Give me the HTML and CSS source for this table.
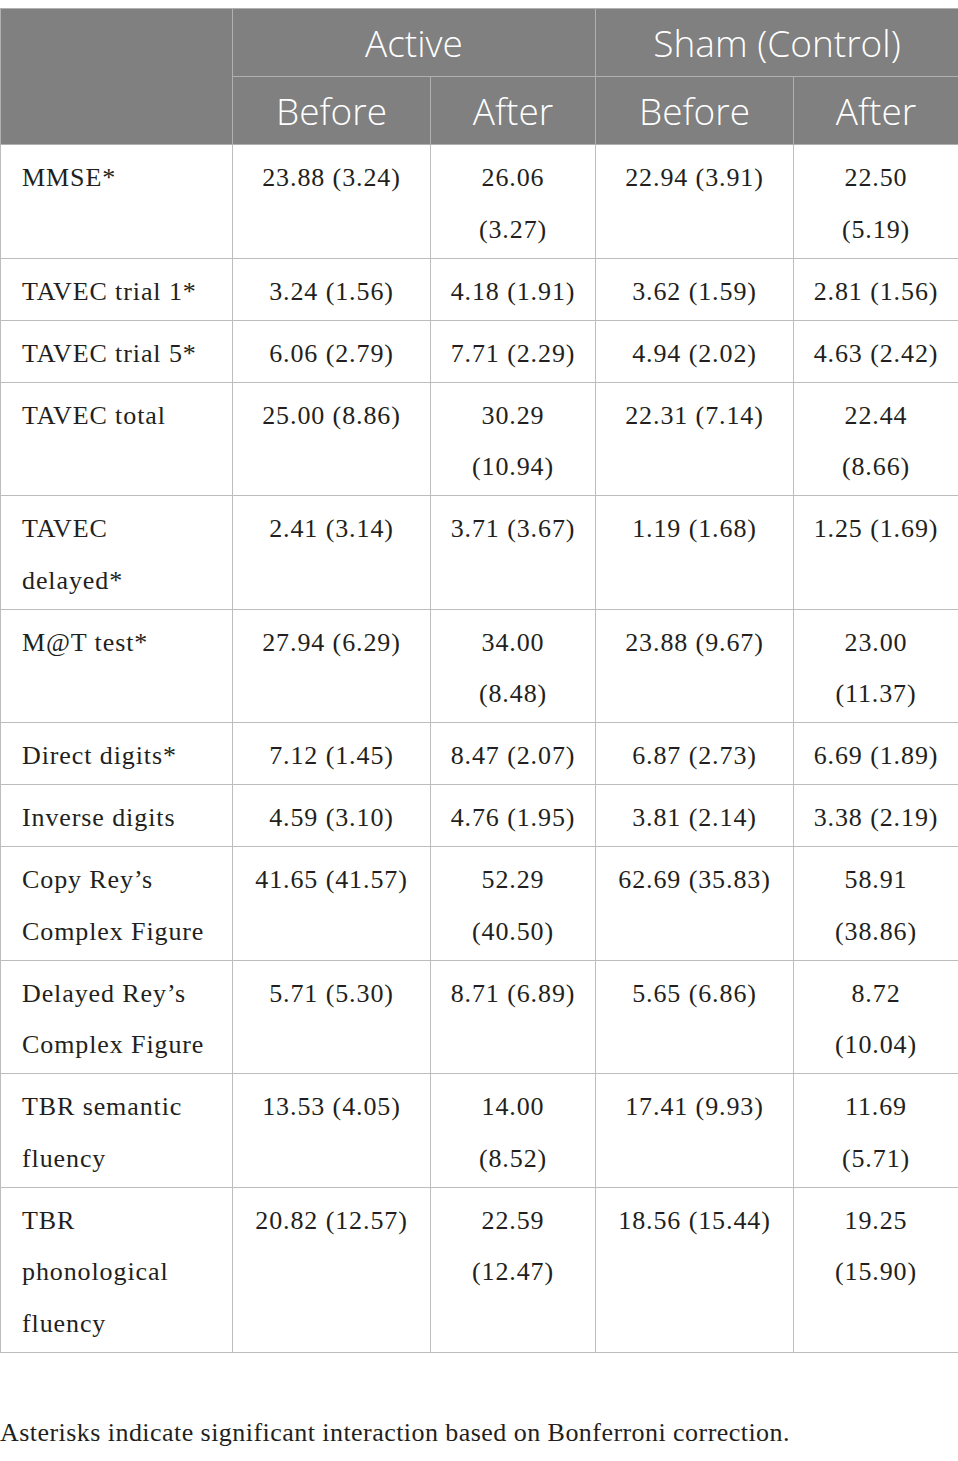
FILE: index.html
```html
<!DOCTYPE html>
<html>
<head>
<meta charset="utf-8">
<link rel="stylesheet" href="styles.css">
</head>
<body>
<table class="data">
  <colgroup>
    <col class="c-label">
    <col class="c-a1">
    <col class="c-a2">
    <col class="c-s1">
    <col class="c-s2">
  </colgroup>
  <thead>
    <tr class="h1">
      <th rowspan="2"></th>
      <th colspan="2">Active</th>
      <th colspan="2">Sham (Control)</th>
    </tr>
    <tr class="h2">
      <th>Before</th>
      <th>After</th>
      <th>Before</th>
      <th>After</th>
    </tr>
  </thead>
  <tbody>
    <tr><td>MMSE*</td><td>23.88 (3.24)</td><td>26.06<br>(3.27)</td><td>22.94 (3.91)</td><td>22.50<br>(5.19)</td></tr>
    <tr><td>TAVEC trial 1*</td><td>3.24 (1.56)</td><td>4.18 (1.91)</td><td>3.62 (1.59)</td><td>2.81 (1.56)</td></tr>
    <tr><td>TAVEC trial 5*</td><td>6.06 (2.79)</td><td>7.71 (2.29)</td><td>4.94 (2.02)</td><td>4.63 (2.42)</td></tr>
    <tr><td>TAVEC total</td><td>25.00 (8.86)</td><td>30.29<br>(10.94)</td><td>22.31 (7.14)</td><td>22.44<br>(8.66)</td></tr>
    <tr><td>TAVEC<br>delayed*</td><td>2.41 (3.14)</td><td>3.71 (3.67)</td><td>1.19 (1.68)</td><td>1.25 (1.69)</td></tr>
    <tr><td>M@T test*</td><td>27.94 (6.29)</td><td>34.00<br>(8.48)</td><td>23.88 (9.67)</td><td>23.00<br>(11.37)</td></tr>
    <tr><td>Direct digits*</td><td>7.12 (1.45)</td><td>8.47 (2.07)</td><td>6.87 (2.73)</td><td>6.69 (1.89)</td></tr>
    <tr><td>Inverse digits</td><td>4.59 (3.10)</td><td>4.76 (1.95)</td><td>3.81 (2.14)</td><td>3.38 (2.19)</td></tr>
    <tr><td>Copy Rey’s<br>Complex Figure</td><td>41.65 (41.57)</td><td>52.29<br>(40.50)</td><td>62.69 (35.83)</td><td>58.91<br>(38.86)</td></tr>
    <tr><td>Delayed Rey’s<br>Complex Figure</td><td>5.71 (5.30)</td><td>8.71 (6.89)</td><td>5.65 (6.86)</td><td>8.72<br>(10.04)</td></tr>
    <tr><td>TBR semantic<br>fluency</td><td>13.53 (4.05)</td><td>14.00<br>(8.52)</td><td>17.41 (9.93)</td><td>11.69<br>(5.71)</td></tr>
    <tr><td>TBR<br>phonological<br>fluency</td><td>20.82 (12.57)</td><td>22.59<br>(12.47)</td><td>18.56 (15.44)</td><td>19.25<br>(15.90)</td></tr>
  </tbody>
</table>
<p class="note">Asterisks indicate significant interaction based on Bonferroni correction.</p>
</body>
</html>
```

FILE: styles.css
```css
html, body {
  margin: 0;
  padding: 0;
  background: #ffffff;
}

body {
  padding-top: 8px;
}

.data {
  width: 958px;
  border-collapse: collapse;
  table-layout: fixed;
}

.c-label { width: 232px; }
.c-a1 { width: 198px; }
.c-a2 { width: 165px; }
.c-s1 { width: 198px; }
.c-s2 { width: 165px; }

.data th {
  background: #7f807f;
  color: #ffffff;
  font-family: "Open Sans", "Lato", sans-serif;
  font-weight: 300;
  font-size: 37px;
  line-height: 40px;
  text-align: center;
  vertical-align: middle;
  border: 1px solid #b0b0b0;
  padding: 0;
}

.data .h1 th { height: 67px; }
.data .h2 th { height: 67px; }

.data td {
  font-family: "Liberation Serif", "Times New Roman", serif;
  font-size: 26px;
  letter-spacing: 0.9px;
  line-height: 51.5px;
  color: #231f20;
  border: 1px solid #bdbdbd;
  padding: 7px 4px 2.5px 4px;
  vertical-align: top;
  text-align: center;
}

.data td:first-child {
  text-align: left;
  padding-left: 21px;
}

.note {
  margin: 64px 0 0 0;
  font-family: "Liberation Serif", "Times New Roman", serif;
  font-size: 26px;
  letter-spacing: 0.45px;
  line-height: 32px;
  color: #231f20;
}
```
